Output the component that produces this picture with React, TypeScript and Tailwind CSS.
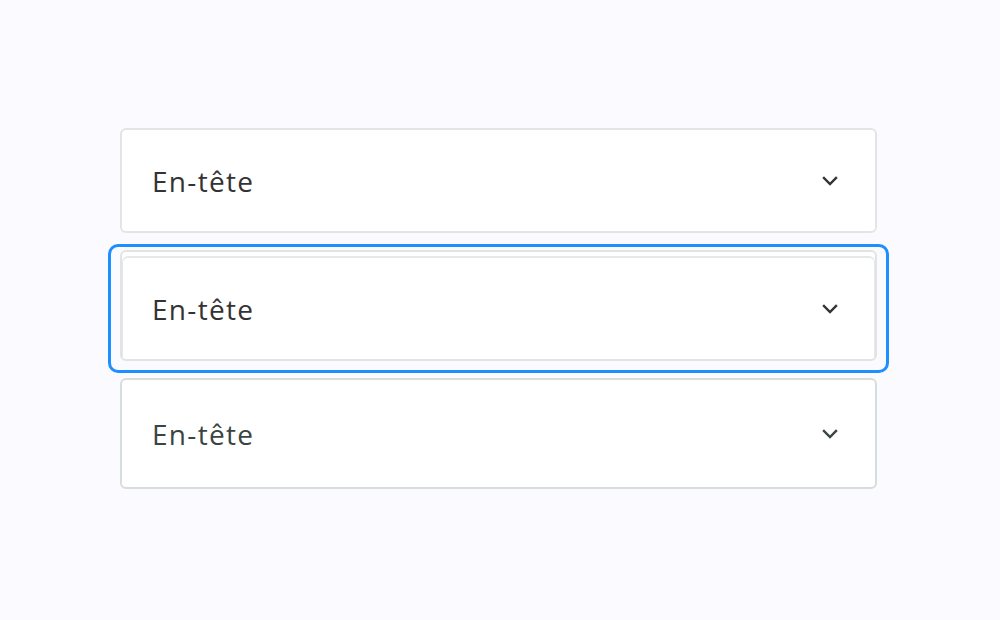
import React from "react";

function Chevron({ color = "#333333" }: { color?: string }) {
  return (
    <svg width="16" height="10" viewBox="0 0 16 10" fill="none" className="shrink-0">
      <polyline points="2,2 8,8 14,2" stroke={color} strokeWidth="2.4" strokeLinecap="square" strokeLinejoin="miter" />
    </svg>
  );
}

function Row({ text, color, inset = false }: { text: string; color: string; inset?: boolean }) {
  return (
    <div className={inset ? "flex items-center justify-between pl-[29px] pr-[36px] h-full" : "flex items-center justify-between pl-[30px] pr-[37px] h-full"}>
      <span className="text-[28px] leading-none tracking-[1.3px]" style={{ color }}>
        {text}
      </span>
      <Chevron color={color} />
    </div>
  );
}

export default function App() {
  const font = { fontFamily: '"Open Sans", "Noto Sans", sans-serif' };
  return (
    <div className="w-[1000px] h-[620px] bg-[#fbfaff] overflow-hidden" style={font}>
      <div className="ml-[120px] w-[757px] pt-[128px]">
        {/* carte 1 */}
        <div className="h-[105px] bg-white border-2 border-[#e4e4e6] rounded-[6px]">
          <Row text="En-tête" color="#333333" />
        </div>

        {/* carte 2 (focus) */}
        <div className="-mx-[12px] mt-[11px] border-[3px] border-[#1e8fff] rounded-[10px] pt-[3px] pb-[9px] px-[9px]">
          <div className="h-[111px] bg-white border-2 border-[#e0e4e4] rounded-[6px] flex flex-col">
            <div className="mt-[4px] flex-1 border-t-2 border-x border-[#e6e8e8] rounded-t-[6px]">
              <Row text="En-tête" color="#333333" inset />
            </div>
          </div>
        </div>

        {/* carte 3 */}
        <div className="mt-[5px] h-[111px] bg-white border-2 border-[#d7dcdc] rounded-[6px]">
          <Row text="En-tête" color="#3a4542" />
        </div>
      </div>
    </div>
  );
}
